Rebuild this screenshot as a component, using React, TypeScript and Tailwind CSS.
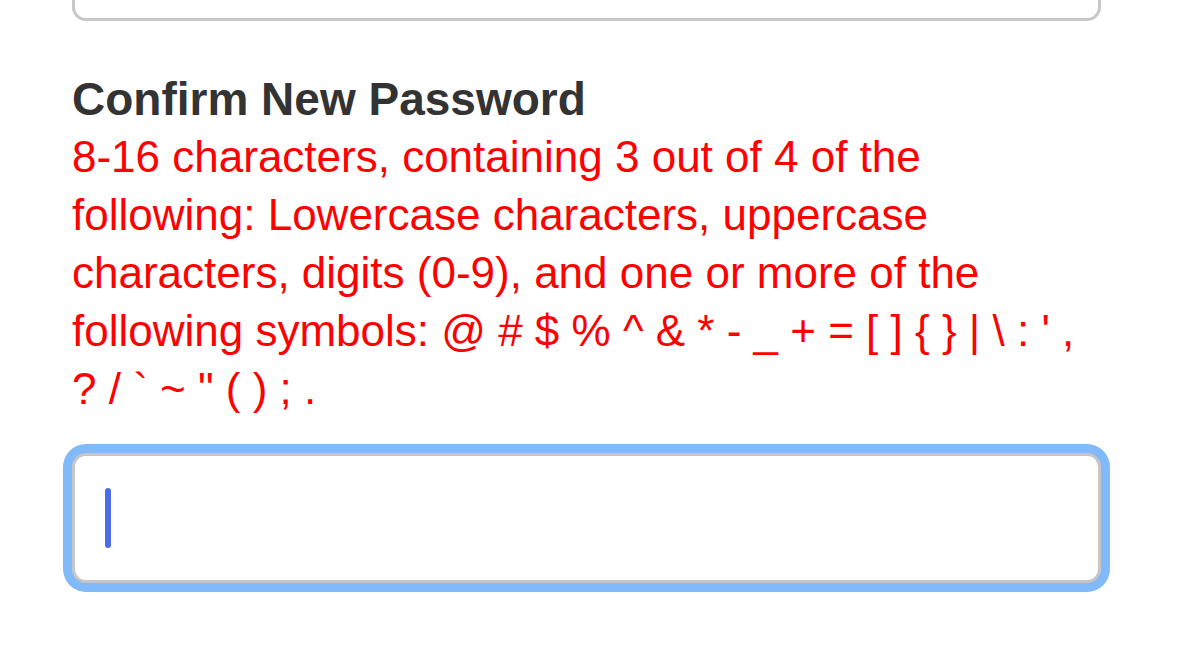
import React from "react";

export default function App() {
	return (
		<div className="min-h-screen bg-white font-['Liberation_Sans',Arial,Helvetica,sans-serif]">
			<div className="ml-[72px] w-[1029px]">
				{/* bottom of the previous field, scrolled mostly out of view */}
				<div className="h-[21px] border-[3px] border-t-0 border-[#c8c8c8] rounded-b-[14px] bg-white" />

				<div className="mt-[49px]">
					<label className="block text-[46px] leading-[58px] font-bold text-[#333333]">
						Confirm New Password
					</label>
					<p className="text-[44px] leading-[58px] text-[#ff0000]">
						8-16 characters, containing 3 out of 4 of the following:
						Lowercase characters, uppercase characters, digits (0-9), and
						one or more of the following symbols: @ # $ % ^ &amp; * - _ + = [
						] {"{"} {"}"} | \ : ' , ? / ` ~ " ( ) ; .
					</p>
				</div>

				<div className="mt-[35px] h-[130px] border-[3px] border-[#c6c6c6] rounded-[14px] bg-white shadow-[0_0_0_9px_#80bafa] flex items-center pl-[30px]">
					<span className="block w-[6px] h-[60px] rounded-full bg-[#4a6de5]" />
				</div>
			</div>
		</div>
	);
}
